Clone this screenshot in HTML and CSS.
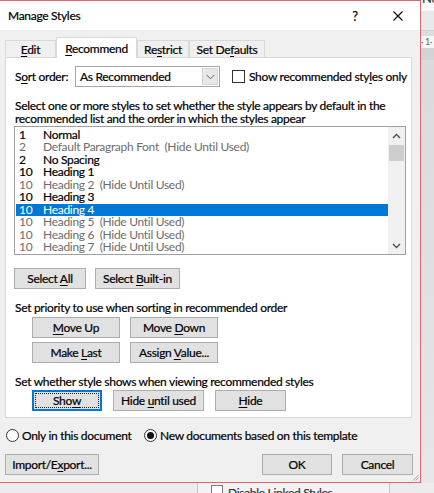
FILE: index.html
```html
<!DOCTYPE html>
<html>
<head>
<meta charset="utf-8">
<title>Manage Styles</title>
<link rel="stylesheet" href="styles.css">
</head>
<body>
<div class="screen">
  <div class="top">
    <div class="dialog">
      <div class="titlebar">
        <span class="title">Manage Styles</span>
        <span class="help">?</span>
        <svg class="close" width="10" height="10" viewBox="0 0 10 10"><path d="M0.5 0.5 L9.5 9.5 M9.5 0.5 L0.5 9.5" stroke="#000" stroke-width="1.1" fill="none"/></svg>
      </div>
      <div class="main">
        <div class="tabs">
          <div class="tab t-edit"><span><u>E</u>dit</span></div>
          <div class="tab sel t-rec"><span><u>R</u>ecommend</span></div>
          <div class="tab t-res"><span>Re<u>s</u>trict</span></div>
          <div class="tab t-def"><span>Set De<u>f</u>aults</span></div>
        </div>
        <div class="panel">
          <div class="sortrow">
            <span class="sortlabel">S<u>o</u>rt order:</span>
            <div class="combo">
              <span class="combo-text">As Recommended</span>
              <span class="combo-btn"><svg width="9" height="6" viewBox="0 0 9 6"><path d="M0.5 0.8 L4.5 4.8 L8.5 0.8" stroke="#606060" stroke-width="1" fill="none"/></svg></span>
            </div>
            <span class="check"></span>
            <span class="checklabel">Show recommended sty<u>l</u>es only</span>
          </div>
          <div class="desc">Select one or more styles to set whether the style appears by default in the recommended list and the order in which the styles appear</div>
          <div class="list">
            <div class="rows">
              <div class="row"><span class="num">1</span><span>Normal</span></div>
              <div class="row hid"><span class="num">2</span><span>Default Paragraph Font&nbsp; (Hide Until Used)</span></div>
              <div class="row"><span class="num">2</span><span>No Spacing</span></div>
              <div class="row"><span class="num">10</span><span>Heading 1</span></div>
              <div class="row hid"><span class="num">10</span><span>Heading 2&nbsp; (Hide Until Used)</span></div>
              <div class="row"><span class="num">10</span><span>Heading 3</span></div>
              <div class="row sel"><span class="num">10</span><span>Heading 4</span></div>
              <div class="row hid"><span class="num">10</span><span>Heading 5&nbsp; (Hide Until Used)</span></div>
              <div class="row hid"><span class="num">10</span><span>Heading 6&nbsp; (Hide Until Used)</span></div>
              <div class="row hid"><span class="num">10</span><span>Heading 7&nbsp; (Hide Until Used)</span></div>
            </div>
            <div class="scroll">
              <div class="sb-btn"><svg width="9" height="6" viewBox="0 0 9 6"><path d="M1 5 L4.5 1.5 L8 5" stroke="#505050" stroke-width="1.4" fill="none"/></svg></div>
              <div class="thumb"></div>
              <div class="sb-space"></div>
              <div class="sb-btn"><svg width="9" height="6" viewBox="0 0 9 6"><path d="M1 1 L4.5 4.5 L8 1" stroke="#505050" stroke-width="1.4" fill="none"/></svg></div>
            </div>
          </div>
          <div class="btnrow">
            <div class="btn w72"><span>Select <u>A</u>ll</span></div>
            <div class="btn w85"><span>Select <u>B</u>uilt-in</span></div>
          </div>
          <div class="label">Set priority to use when sorting in recommended order</div>
          <div class="prio">
            <div class="btn"><span><u>M</u>ove Up</span></div>
            <div class="btn"><span>Move <u>D</u>own</span></div>
            <div class="btn"><span>Make <u>L</u>ast</span></div>
            <div class="btn"><span>Assign <u>V</u>alue...</span></div>
          </div>
          <div class="label">Set whether style shows when viewing recommended styles</div>
          <div class="showrow">
            <div class="btn w70 focus"><span>Sho<u>w</u></span></div>
            <div class="btn w91"><span>Hide <u>u</u>ntil used</span></div>
            <div class="btn w71"><span><u>H</u>ide</span></div>
          </div>
        </div>
        <div class="radiorow">
          <div class="opt1">
            <span class="radio"></span>
            <span class="rlabel">Only in this document</span>
          </div>
          <div class="opt2">
            <span class="radio"><span class="dot"></span></span>
            <span class="rlabel">New documents based on this template</span>
          </div>
        </div>
        <div class="bottombar">
          <div class="btn w94"><span>Import/E<u>x</u>port...</span></div>
          <div class="spacer"></div>
          <div class="btn w70"><span>OK</span></div>
          <div class="btn w71"><span>Cancel</span></div>
        </div>
      </div>
      <svg class="grip" width="7" height="7" viewBox="0 0 7 7"><path d="M6.5 1 L1 6.5 M6.5 3.5 L3.5 6.5 M6.5 6 L6 6.5" stroke="#a8a8a8" stroke-width="1" fill="none"/></svg>
    </div>
    <div class="word-right">
      <div class="wr-a"><span>Ne</span></div>
      <div class="wr-b"></div>
      <div class="wr-c"></div>
      <div class="wr-ruler">· 1·</div>
      <div class="wr-d"></div>
      <div class="wr-e"></div>
    </div>
  </div>
  <div class="word-bottom">
    <div class="wb-panel">
      <span class="wb-check"></span>
      <span class="wb-text">Disable Linked Styles</span>
    </div>
  </div>
</div>
</body>
</html>
```

FILE: styles.css
```css
* { box-sizing: border-box; }
html, body { margin: 0; padding: 0; }
body {
  width: 434px;
  height: 493px;
  overflow: hidden;
  font-family: Lato, "Liberation Sans", sans-serif;
  font-size: 12px;
  letter-spacing: -0.3px;
  -webkit-text-stroke: 0.2px currentColor;
  color: #000;
  background: #ececec;
}
u { text-decoration-thickness: 1px; text-underline-offset: 2px; }
.screen { display: flex; flex-direction: column; width: 434px; height: 493px; }
.top { display: flex; height: 483px; flex: none; }

.dialog {
  position: relative;
  width: 421px;
  height: 483px;
  flex: none;
  background: #f0f0f0;
  border-top: 1px solid #e1646f;
  border-right: 1px solid #e1646f;
  border-bottom: 1px solid #e1646f;
  display: flex;
  flex-direction: column;
}
.titlebar {
  height: 29px;
  flex: none;
  background: #fff;
  display: flex;
  align-items: center;
  padding-left: 8px;
}
.title { flex: 1; }
.help { width: 8px; text-align: center; margin-right: 34px; font-size: 13px; }
.close { margin-right: 17px; flex: none; }

.main {
  flex: 1;
  display: flex;
  flex-direction: column;
  padding: 7px 7px 0 5px;
}
.tabs {
  display: flex;
  align-items: flex-end;
  height: 20px;
  flex: none;
  position: relative;
  z-index: 1;
}
.tab {
  height: 17px;
  border: 1px solid #d9d9d9;
  border-bottom: none;
  background: #f0f0f0;
  display: flex;
  align-items: center;
  justify-content: center;
  flex: none;
}
.tab.sel { height: 21px; background: #fff; margin-bottom: -1px; padding-top: 1px; }
.t-edit { width: 51px; }
.t-rec { width: 81px; }
.t-res { width: 52px; }
.t-def { width: 76px; }

.panel {
  width: 407px;
  height: 361px;
  flex: none;
  background: #fff;
  border: 1px solid #d9d9d9;
  padding: 8px 5px 0 8px;
}
.sortrow { display: flex; align-items: center; height: 21px; }
.sortlabel { width: 61px; flex: none; padding-left: 1px; }
.combo {
  width: 145px;
  height: 21px;
  flex: none;
  border: 1px solid #a6a6a6;
  background: #fff;
  display: flex;
}
.combo-text { flex: 1; padding-left: 4px; line-height: 19px; }
.combo-btn {
  width: 16px;
  margin: 1px 1px 1px 0;
  background: #e8e8e8;
  border: 1px solid #d4d4d4;
  display: flex;
  align-items: center;
  justify-content: center;
}
.check {
  width: 13px;
  height: 13px;
  flex: none;
  border: 1px solid #333;
  background: #fff;
  margin-left: 12px;
}
.checklabel { margin-left: 4px; white-space: nowrap; }

.desc { margin-top: 12px; line-height: 13px; padding-left: 1px; }
.list {
  margin-top: 1px;
  width: 392px;
  height: 129px;
  border: 1px solid #a0a0a0;
  display: flex;
}
.rows { flex: 1; padding-top: 1.75px; }
.row {
  height: 12.5px;
  line-height: 12.5px;
  display: flex;
  margin-left: 1px;
  padding-left: 3px;
  white-space: nowrap;
}
.num { width: 24px; flex: none; }
.row.hid { color: #6d6d6d; -webkit-text-stroke: 0; }
.row.sel { background: #0078d7; color: #fff; -webkit-text-stroke: 0; }
.scroll {
  width: 17px;
  flex: none;
  background: #f0f0f0;
  display: flex;
  flex-direction: column;
}
.sb-btn { height: 17px; display: flex; align-items: center; justify-content: center; flex: none; }
.thumb { height: 16px; margin: 1px 1px 0; background: #cdcdcd; flex: none; }
.sb-space { flex: 1; }

.btn {
  height: 21px;
  flex: none;
  border: 1px solid #adadad;
  background: #e1e1e1;
  display: flex;
  align-items: center;
  justify-content: center;
  white-space: nowrap;
}
.w70 { width: 70px; }
.w71 { width: 71px; }
.w72 { width: 72px; }
.w85 { width: 85px; }
.w91 { width: 91px; }
.w94 { width: 94px; }
.btn.focus {
  border: 2px solid #0078d7;
  outline: 1px dotted #222;
  outline-offset: -4px;
}
.btnrow { display: flex; gap: 9px; margin-top: 13px; }
.label { margin-top: 12px; line-height: 13px; padding-left: 1px; }
.prio {
  margin-top: 3px;
  margin-left: 18px;
  display: grid;
  grid-template-columns: 88px 88px;
  column-gap: 10px;
  row-gap: 4px;
}
.showrow { margin-top: 2px; margin-left: 18px; display: flex; gap: 11px; }

.radiorow { margin-top: 9px; height: 16px; display: flex; align-items: center; flex: none; }
.opt1 { width: 138px; display: flex; align-items: center; flex: none; }
.opt2 { display: flex; align-items: center; }
.radio {
  width: 13px;
  height: 13px;
  margin-left: 1px;
  border: 1px solid #333;
  border-radius: 50%;
  background: #fff;
  display: flex;
  align-items: center;
  justify-content: center;
  flex: none;
}
.dot { width: 7px; height: 7px; border-radius: 50%; background: #111; }
.rlabel { margin-left: 3px; white-space: nowrap; }

.bottombar { margin-top: 11px; display: flex; gap: 10px; flex: none; }
.spacer { flex: 1; }
.grip { position: absolute; right: 1px; bottom: 1px; }

.word-right { flex: 1; display: flex; flex-direction: column; background: #e3e3e3; overflow: hidden; }
.wr-a { height: 11px; background: #fafafa; overflow: hidden; color: #444; }
.wr-a span { display: block; margin-top: -9px; margin-left: 1px; font-size: 13px; line-height: 14px; }
.wr-b { height: 20px; background: #e9e9e9; border-bottom: 1px solid #d2d2d2; }
.wr-c { height: 5px; background: #dedede; }
.wr-ruler { height: 12px; background: #f6f6f6; color: #666; font-size: 9px; line-height: 12px; white-space: nowrap; -webkit-text-stroke: 0; }
.wr-d { height: 12px; background: #d3d3d3; }
.wr-e { flex: 1; background: linear-gradient(#dadada, #e6e6e6); }

.word-bottom { height: 10px; flex: none; display: flex; background: #ececec; overflow: hidden; }
.wb-panel {
  margin-left: 197px;
  width: 193px;
  border-left: 1px solid #c4c4c4;
  border-right: 1px solid #c4c4c4;
  background: #f3f3f3;
  padding: 2px 0 0 13px;
  display: flex;
  align-items: flex-start;
}
.wb-check { width: 12px; height: 12px; border: 1px solid #7a7a7a; background: #fff; flex: none; }
.wb-text { margin-left: 5px; margin-top: 2px; line-height: 12px; color: #333; white-space: nowrap; }
```
